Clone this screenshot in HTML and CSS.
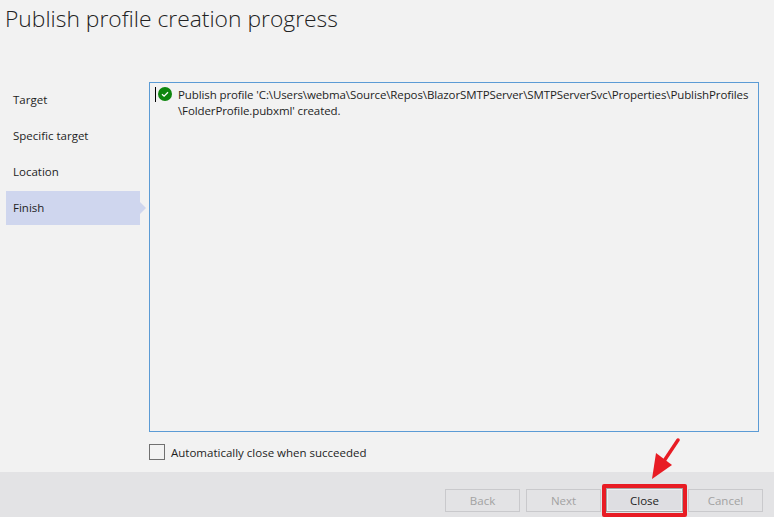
FILE: index.html
```html
<!DOCTYPE html>
<html lang="en">
<head>
<meta charset="utf-8">
<title>Publish profile creation progress</title>
<link rel="stylesheet" href="styles.css">
</head>
<body>
<div class="app">
  <h1 class="title">Publish profile creation progress</h1>
  <div class="main">
    <nav class="steps">
      <div class="step">Target</div>
      <div class="step">Specific target</div>
      <div class="step">Location</div>
      <div class="step active">Finish</div>
    </nav>
    <div class="content">
      <div class="log">
        <span class="caret"></span>
        <svg class="ok" viewBox="0 0 14 14" width="14" height="14">
          <circle cx="7" cy="7" r="7" fill="#0e860e"/>
          <path d="M4 7.2l2.1 2L10 5.2" fill="none" stroke="#fff" stroke-width="1.3"/>
        </svg>
        <p class="log-text">Publish profile 'C:\Users\webma\Source\Repos\BlazorSMTPServer\SMTPServerSvc\Properties\PublishProfiles<br>\FolderProfile.pubxml' created.</p>
      </div>
      <label class="auto"><span class="box"></span>Automatically close when succeeded</label>
    </div>
  </div>
  <footer class="footer">
    <button class="btn" disabled>Back</button>
    <button class="btn" disabled>Next</button>
    <span class="highlight"><button class="btn primary">Close</button></span>
    <button class="btn" disabled>Cancel</button>
  </footer>
  <svg class="pointer" viewBox="0 0 40 50" width="40" height="50">
    <path d="M38 2L24 23" stroke="#e81c24" stroke-width="3.4" stroke-linecap="round" fill="none"/>
    <path d="M12 41L16 15L32 27Z" fill="#e81c24"/>
  </svg>
</div>
</body>
</html>
```
FILE: styles.css
```css
* { box-sizing: border-box; }
html, body { margin: 0; height: 100%; }
body {
  background: #f2f2f2;
  color: #1e1e1e;
  font-family: "Open Sans", "Liberation Sans", sans-serif;
  font-size: 11.5px;
  overflow: hidden;
}
.app {
  position: relative;
  width: 774px;
  height: 517px;
  display: flex;
  flex-direction: column;
}
.title {
  margin: 0;
  padding: 4px 0 0 5px;
  height: 82px;
  font-size: 22.85px;
  font-weight: 300;
  line-height: 30px;
  color: #222;
}
.main { flex: 1; display: flex; min-height: 0; }
.steps {
  width: 143px;
  padding: 1px 0 0 6px;
  display: flex;
  flex-direction: column;
  gap: 2px;
}
.step {
  position: relative;
  width: 134px;
  height: 34px;
  padding: 0 0 2px 7px;
  display: flex;
  align-items: center;
}
.step.active { background: #cfd6ee; }
.step.active::after {
  content: "";
  position: absolute;
  left: 100%;
  top: 11px;
  border-left: 6px solid #cfd6ee;
  border-top: 6px solid transparent;
  border-bottom: 6px solid transparent;
}
.content {
  flex: 1;
  padding-left: 6px;
  padding-right: 15px;
  display: flex;
  flex-direction: column;
}
.log {
  position: relative;
  height: 350px;
  border: 1px solid #5b9bd5;
  padding: 4px 0 0 28px;
}
.caret {
  position: absolute;
  left: 5px;
  top: 4px;
  width: 1px;
  height: 15px;
  background: #000;
}
.ok { position: absolute; left: 8px; top: 4px; }
.log-text {
  margin: 0;
  line-height: 16px;
  white-space: nowrap;
  letter-spacing: -0.11px;
}
.auto {
  margin-top: 12px;
  display: flex;
  align-items: center;
  gap: 6px;
  height: 16px;
}
.box {
  width: 16px;
  height: 16px;
  border: 1px solid #707070;
}
.footer {
  height: 45px;
  background: #e3e3e5;
  padding: 17px 11px 0 0;
  display: flex;
  justify-content: flex-end;
  align-items: flex-start;
  gap: 6px;
}
.btn {
  width: 75px;
  height: 23px;
  padding: 0;
  background: transparent;
  border: 1px solid #c9c9cc;
  color: #a2a2a2;
  font: inherit;
  font-size: 11.5px;
}
.btn.primary {
  display: block;
  width: 77px;
  height: 24px;
  background: #dedee2;
  border-color: #a3a3a3;
  box-shadow: inset 0 0 0 1px #efeff1;
  color: #1e1e1e;
}
.highlight {
  display: block;
  margin: -5px -5px 0 -5px;
  border: 4px solid #e81c24;
  border-radius: 2px;
  width: 85px;
  height: 33px;
}
.pointer { position: absolute; left: 640px; top: 438px; }
```
